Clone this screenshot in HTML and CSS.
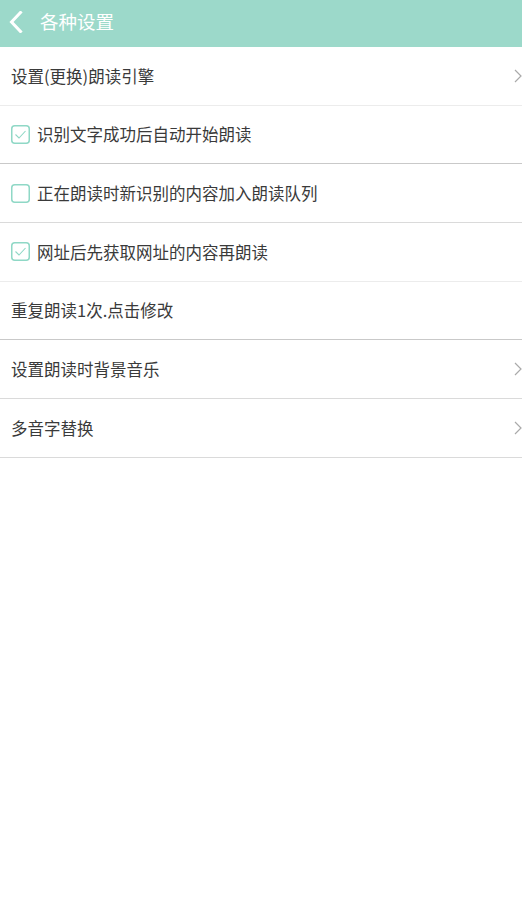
FILE: index.html
```html
<!DOCTYPE html>
<html lang="zh-CN">
<head>
<meta charset="utf-8">
<title>各种设置</title>
<link rel="stylesheet" href="styles.css">
</head>
<body>
<header class="topbar">
  <svg class="back" width="14" height="22" viewBox="0 0 14 22"><path d="M11.5 1.5 L2.5 11 L11.5 20.5" fill="none" stroke="#fff" stroke-width="3" stroke-linecap="square" stroke-linejoin="miter"/></svg>
  <span class="title">各种设置</span>
</header>
<ul class="list">
  <li class="row sep-light"><span class="label">设置(更换)朗读引擎</span><svg class="arrow" width="8" height="14" viewBox="0 0 8 14"><path d="M1 1 L7 7 L1 13" fill="none" stroke="#aaa" stroke-width="1.2"/></svg></li>
  <li class="row sep-dark"><span class="box"><svg width="19" height="19" viewBox="0 0 19 19"><rect x="0.75" y="0.75" width="17.5" height="17.5" rx="3" fill="none" stroke="#8fd8c6" stroke-width="1.5"/><path d="M4.5 9.5 L8 13 L14.5 6" fill="none" stroke="#8fd8c6" stroke-width="1.1"/></svg></span><span class="label">识别文字成功后自动开始朗读</span></li>
  <li class="row sep-mid"><span class="box"><svg width="19" height="19" viewBox="0 0 19 19"><rect x="0.75" y="0.75" width="17.5" height="17.5" rx="3" fill="none" stroke="#8fd8c6" stroke-width="1.5"/></svg></span><span class="label">正在朗读时新识别的内容加入朗读队列</span></li>
  <li class="row sep-light"><span class="box"><svg width="19" height="19" viewBox="0 0 19 19"><rect x="0.75" y="0.75" width="17.5" height="17.5" rx="3" fill="none" stroke="#8fd8c6" stroke-width="1.5"/><path d="M4.5 9.5 L8 13 L14.5 6" fill="none" stroke="#8fd8c6" stroke-width="1.1"/></svg></span><span class="label">网址后先获取网址的内容再朗读</span></li>
  <li class="row sep-dark"><span class="label">重复朗读1次.点击修改</span></li>
  <li class="row sep-mid"><span class="label">设置朗读时背景音乐</span><svg class="arrow" width="8" height="14" viewBox="0 0 8 14"><path d="M1 1 L7 7 L1 13" fill="none" stroke="#aaa" stroke-width="1.2"/></svg></li>
  <li class="row sep-mid"><span class="label">多音字替换</span><svg class="arrow" width="8" height="14" viewBox="0 0 8 14"><path d="M1 1 L7 7 L1 13" fill="none" stroke="#aaa" stroke-width="1.2"/></svg></li>
</ul>
</body>
</html>
```

FILE: styles.css
```css
html, body {
  margin: 0;
  padding: 0;
  background: #fff;
}
body {
  font-family: "Noto Sans CJK SC", "Noto Sans", sans-serif;
  width: 522px;
}
.topbar {
  height: 47px;
  background: #9cd9ca;
  display: flex;
  align-items: center;
  box-sizing: border-box;
  padding-left: 9px;
  padding-bottom: 4px;
}
.back {
  display: block;
}
.title {
  color: #fff;
  font-size: 18.5px;
  margin-left: 17px;
  line-height: 1;
}
.list {
  list-style: none;
  margin: 0;
  padding: 0;
}
.row {
  height: 57.7px;
  display: flex;
  align-items: center;
  padding-left: 11px;
  border-bottom: 1px solid #dcdcdc;
}
.sep-light { border-bottom-color: #ececec; }
.sep-dark { border-bottom-color: #c9c9c9; }
.sep-mid { border-bottom-color: #dadada; }
.label {
  font-size: 16.5px;
  color: #3a3a3a;
  line-height: 1;
}
.box {
  width: 19px;
  height: 19px;
  margin-right: 7px;
  flex: none;
}
.box svg {
  display: block;
}
.arrow {
  margin-left: auto;
  display: block;
}
```
